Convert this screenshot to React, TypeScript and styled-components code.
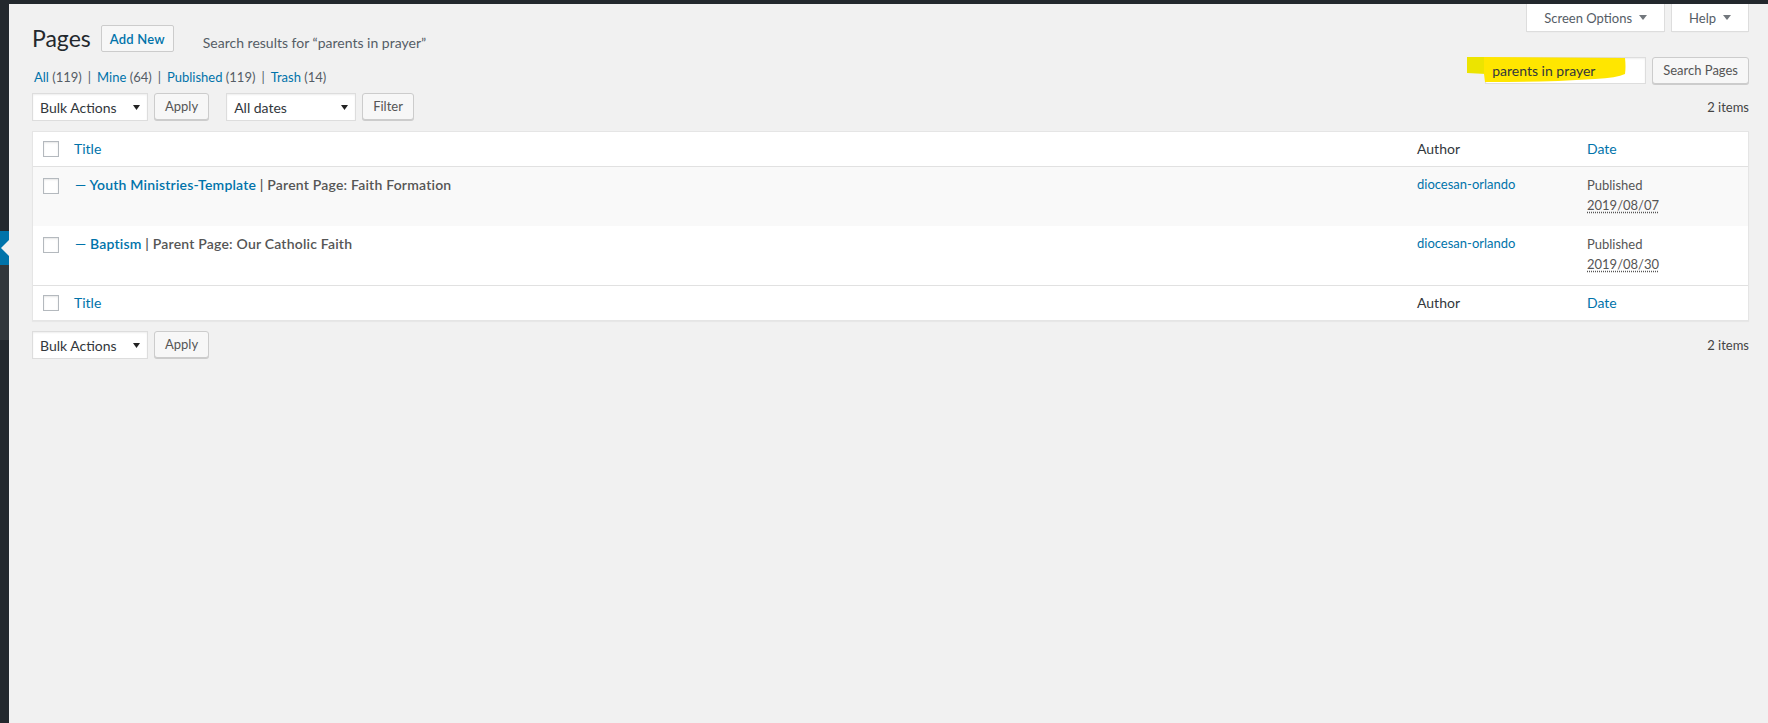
import React from "react";
import styled, { createGlobalStyle } from "styled-components";

const GlobalStyle = createGlobalStyle`
  html, body { margin: 0; padding: 0; }
  *, *::before, *::after { box-sizing: border-box; }
  body {
    background: #f1f1f1;
    font-family: Lato, "Noto Sans", "Liberation Sans", sans-serif;
    font-size: 13px;
    color: #444;
  }
  #root { min-height: 100vh; }
`;

const Shell = styled.div`
  display: flex;
  flex-direction: column;
  min-height: 100vh;
`;

const TopBar = styled.div`
  flex: none;
  height: 4px;
  background: #23282d;
`;

const Body = styled.div`
  flex: 1;
  display: flex;
`;

const Sidebar = styled.nav`
  flex: none;
  width: 9px;
  display: flex;
  flex-direction: column;
  background: #23282d;
`;

const MenuGap = styled.div<{ $h: number }>`
  height: ${(p) => p.$h}px;
`;

const CurrentItem = styled.div`
  height: 34px;
  background: #0073aa;
  display: flex;
  align-items: center;
  justify-content: flex-end;
`;

const CurrentArrow = styled.span`
  width: 0;
  height: 0;
  border-top: 8px solid transparent;
  border-bottom: 8px solid transparent;
  border-right: 8px solid #f1f1f1;
`;

const Submenu = styled.div`
  height: 75px;
  background: #32373c;
`;

const Main = styled.main`
  flex: 1;
  min-width: 0;
  padding: 0 19px 0 23px;
`;

const TopArea = styled.div`
  display: flex;
  justify-content: space-between;
  align-items: flex-start;
`;

const HeadLeft = styled.div`
  display: flex;
  flex-direction: column;
`;

const TitleRow = styled.div`
  display: flex;
  align-items: flex-start;
  margin-top: 21px;
  height: 27px;
`;

const PageTitle = styled.h1`
  margin: 0;
  font-size: 23px;
  font-weight: 400;
  line-height: 27px;
  color: #23282d;
`;

const AddNew = styled.a`
  margin-left: 10px;
  height: 27px;
  padding: 0 8px;
  display: inline-flex;
  align-items: center;
  border: 1px solid #ccc;
  border-radius: 2px;
  background: #f7f7f7;
  color: #0073aa;
  font-size: 13px;
  font-weight: 600;
  letter-spacing: 0.2px;
  text-decoration: none;
`;

const Subtitle = styled.span`
  margin: 4px 0 0 29px;
  font-size: 14px;
  line-height: 27px;
  color: #555d66;
`;

const StatusList = styled.ul`
  list-style: none;
  margin: 12px 0 0 2px;
  padding: 0;
  display: flex;
  font-size: 13px;
  line-height: 26px;
  color: #555d66;
`;

const StatusLink = styled.a`
  color: #0073aa;
  text-decoration: none;
`;

const Count = styled.span`
  color: #555d66;
`;

const Sep = styled.span`
  padding: 0 6px;
  color: #555d66;
`;

const HeadRight = styled.div`
  display: flex;
  flex-direction: column;
  align-items: flex-end;
`;

const Tabs = styled.div`
  display: flex;
  gap: 6px;
`;

const Tab = styled.button`
  height: 28px;
  padding: 0 17px 0 17px;
  display: flex;
  align-items: center;
  gap: 7px;
  background: #fff;
  border: 1px solid #ddd;
  border-top: none;
  box-shadow: 0 1px 1px -1px rgba(0, 0, 0, 0.1);
  font-family: inherit;
  font-size: 13px;
  color: #555d66;
`;

const SearchBox = styled.div`
  margin-top: 25px;
  display: flex;
  gap: 6px;
`;

const SearchField = styled.div`
  position: relative;
  width: 161px;
  height: 27px;
  background: #fff;
  border: 1px solid #ddd;
  box-shadow: inset 0 1px 2px rgba(0, 0, 0, 0.07);
`;

const Highlight = styled.svg`
  position: absolute;
  left: -19px;
  top: -1px;
  width: 160px;
  height: 26px;
  overflow: visible;
`;

const SearchInput = styled.input`
  position: relative;
  width: 100%;
  height: 100%;
  border: none;
  background: transparent;
  padding: 0 6px;
  font-family: inherit;
  font-size: 14px;
  color: #32373c;
  outline: none;
`;

const Button = styled.button`
  height: 27px;
  padding: 0 10px;
  border: 1px solid #ccc;
  border-radius: 3px;
  background: #f7f7f7;
  box-shadow: 0 1px 0 #ccc;
  font-family: inherit;
  font-size: 13px;
  line-height: 25px;
  color: #555;
  white-space: nowrap;
`;

const TableNav = styled.div<{ $gap: number }>`
  margin-top: ${(p) => p.$gap}px;
  height: 28px;
  display: flex;
  align-items: flex-start;
`;

const SelectBox = styled.div<{ $w: number; $ml?: number }>`
  width: ${(p) => p.$w}px;
  margin-left: ${(p) => p.$ml ?? 0}px;
  height: 28px;
  padding: 0 7px 0 7px;
  display: flex;
  align-items: center;
  justify-content: space-between;
  background: #fff;
  border: 1px solid #ddd;
  box-shadow: inset 0 1px 2px rgba(0, 0, 0, 0.07);
  font-size: 14px;
  color: #32373c;
`;

const NavButton = styled(Button)<{ $ml: number }>`
  margin-left: ${(p) => p.$ml}px;
`;

const ItemCount = styled.span`
  margin-left: auto;
  line-height: 28px;
  font-size: 13px;
  color: #444;
`;

const ListTable = styled.div`
  margin-top: 10px;
  background: #fff;
  border: 1px solid #e5e5e5;
  box-shadow: 0 1px 1px rgba(0, 0, 0, 0.04);
`;

const Row = styled.div`
  display: grid;
  grid-template-columns: 31px 1fr 170px 171px;
`;

const HeadRow = styled(Row)<{ $foot?: boolean }>`
  height: 35px;
  align-items: center;
  ${(p) =>
    p.$foot ? "border-top: 1px solid #e1e1e1;" : "border-bottom: 1px solid #e1e1e1;"}
`;

const DataRow = styled(Row)<{ $alt?: boolean }>`
  height: 59px;
  align-items: start;
  background: ${(p) => (p.$alt ? "#f9f9f9" : "#fff")};
`;

const CheckCell = styled.div<{ $top?: number }>`
  padding: ${(p) => p.$top ?? 0}px 0 0 10px;
  display: flex;
`;

const Check = styled.input.attrs({ type: "checkbox" })`
  appearance: none;
  margin: 0;
  width: 16px;
  height: 16px;
  border: 1px solid #b4b9be;
  background: #fff;
  box-shadow: inset 0 1px 2px rgba(0, 0, 0, 0.1);
`;

const HeadCell = styled.div<{ $link?: boolean; $pl?: number }>`
  padding: 0 10px 0 ${(p) => p.$pl ?? 10}px;
  font-size: 14px;
  line-height: 19.6px;
  color: ${(p) => (p.$link ? "#0073aa" : "#32373c")};
`;

const Cell = styled.div<{ $pl?: number; $pt?: number }>`
  padding: ${(p) => p.$pt ?? 8}px 10px 8px ${(p) => p.$pl ?? 10}px;
  font-size: 13px;
  line-height: 19.5px;
  color: #555;
`;

const RowTitle = styled.strong`
  font-size: 14px;
  line-height: 19.6px;
  font-weight: 600;
  letter-spacing: 0.2px;
  color: #555;
`;

const TitleLink = styled.a`
  color: #0073aa;
  text-decoration: none;
`;

const AuthorLink = styled.a`
  color: #0073aa;
  text-decoration: none;
`;

const DateAbbr = styled.abbr`
  text-decoration: underline dotted #555;
  text-underline-offset: 2px;
`;

const Caret = ({ w = 7, h = 5, c = "#222" }: { w?: number; h?: number; c?: string }) => (
  <svg width={w} height={h} viewBox={`0 0 ${w} ${h}`} aria-hidden>
    <polygon points={`0,0 ${w},0 ${w / 2},${h}`} fill={c} />
  </svg>
);

type Page = {
  title: string;
  parent: string;
  author: string;
  date: string;
};

const pages: Page[] = [
  {
    title: "— Youth Ministries-Template",
    parent: "Faith Formation",
    author: "diocesan-orlando",
    date: "2019/08/07",
  },
  {
    title: "— Baptism",
    parent: "Our Catholic Faith",
    author: "diocesan-orlando",
    date: "2019/08/30",
  },
];

const statuses = [
  { label: "All", count: 119 },
  { label: "Mine", count: 64 },
  { label: "Published", count: 119 },
  { label: "Trash", count: 14 },
];

const ColumnHeads = ({ foot }: { foot?: boolean }) => (
  <HeadRow $foot={foot}>
    <CheckCell>
      <Check aria-label="Select all" />
    </CheckCell>
    <HeadCell $link>Title</HeadCell>
    <HeadCell>Author</HeadCell>
    <HeadCell $link>Date</HeadCell>
  </HeadRow>
);

export default function App() {
  return (
    <>
      <GlobalStyle />
      <Shell>
        <TopBar />
        <Body>
          <Sidebar>
            <MenuGap $h={227} />
            <CurrentItem>
              <CurrentArrow />
            </CurrentItem>
            <Submenu />
          </Sidebar>
          <Main>
            <TopArea>
              <HeadLeft>
                <TitleRow>
                  <PageTitle>Pages</PageTitle>
                  <AddNew href="#">Add New</AddNew>
                  <Subtitle>Search results for “parents in prayer”</Subtitle>
                </TitleRow>
                <StatusList>
                  {statuses.map((s, i) => (
                    <li key={s.label}>
                      <StatusLink href="#">
                        {s.label} <Count>({s.count})</Count>
                      </StatusLink>
                      {i < statuses.length - 1 && <Sep>|</Sep>}
                    </li>
                  ))}
                </StatusList>
              </HeadLeft>
              <HeadRight>
                <Tabs>
                  <Tab>
                    Screen Options <Caret w={8} h={5} c="#72777c" />
                  </Tab>
                  <Tab>
                    Help <Caret w={8} h={5} c="#72777c" />
                  </Tab>
                </Tabs>
                <SearchBox>
                  <SearchField>
                    <Highlight viewBox="0 0 160 26" aria-hidden>
                      <path d="M0 0 L19 0 L19 17 L0 16 Z" fill="#ece400" />
                      <path
                        d="M17 0 L158 1 Q159 10 158 17 Q150 21 128 22 Q80 25 40 25 L18 25 L17 17 Z"
                        fill="#ffe600"
                      />
                    </Highlight>
                    <SearchInput defaultValue="parents in prayer" aria-label="Search Pages" />
                  </SearchField>
                  <Button>Search Pages</Button>
                </SearchBox>
              </HeadRight>
            </TopArea>

            <TableNav $gap={3}>
              <SelectBox $w={116}>
                Bulk Actions <Caret />
              </SelectBox>
              <NavButton $ml={6}>Apply</NavButton>
              <SelectBox $w={130} $ml={17}>
                All dates <Caret />
              </SelectBox>
              <NavButton $ml={6}>Filter</NavButton>
              <ItemCount>2 items</ItemCount>
            </TableNav>

            <ListTable>
              <ColumnHeads />
              {pages.map((p, i) => (
                <DataRow key={p.title} $alt={i % 2 === 0}>
                  <CheckCell $top={11}>
                    <Check aria-label={`Select ${p.title}`} />
                  </CheckCell>
                  <Cell $pl={11}>
                    <RowTitle>
                      <TitleLink href="#">{p.title}</TitleLink> | Parent Page: {p.parent}
                    </RowTitle>
                  </Cell>
                  <Cell $pt={8}>
                    <AuthorLink href="#">{p.author}</AuthorLink>
                  </Cell>
                  <Cell $pt={9}>
                    Published
                    <br />
                    <DateAbbr title={`${p.date} 12:00:00 pm`}>{p.date}</DateAbbr>
                  </Cell>
                </DataRow>
              ))}
              <ColumnHeads foot />
            </ListTable>

            <TableNav $gap={10}>
              <SelectBox $w={116}>
                Bulk Actions <Caret />
              </SelectBox>
              <NavButton $ml={6}>Apply</NavButton>
              <ItemCount>2 items</ItemCount>
            </TableNav>
          </Main>
        </Body>
      </Shell>
    </>
  );
}
